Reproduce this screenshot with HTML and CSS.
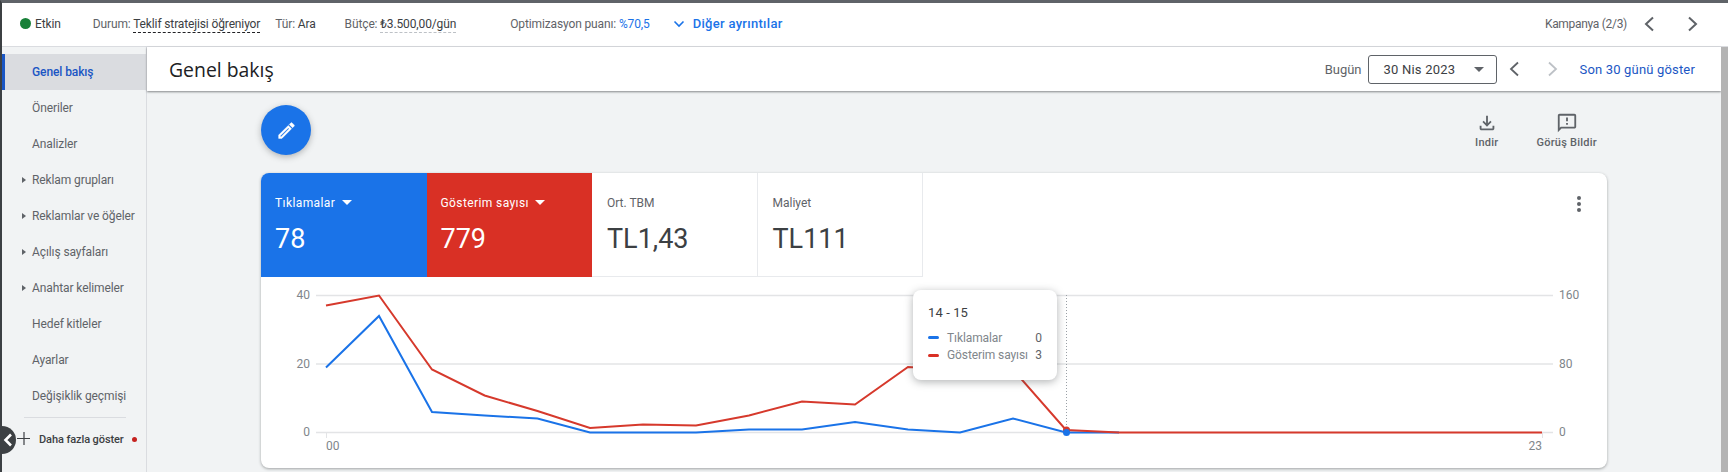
FILE: index.html
```html
<!DOCTYPE html>
<html lang="tr">
<head>
  <meta charset="UTF-8" />
  <title>Genel bakış</title>
  <link rel="stylesheet" href="styles.css">
</head>
<body>

  <div class="summary-bar">
    <span class="status-dot"></span>
    <span class="status-text">Etkin</span>
    <span class="sum-item sum-durum">Durum: <b class="dashed-dark">Teklif stratejisi öğreniyor</b></span>
    <span class="sum-item sum-tur">Tür: <b>Ara</b></span>
    <span class="sum-item sum-butce">Bütçe: <b class="dashed-light">₺3.500,00/gün</b></span>
    <span class="sum-item sum-puan">Optimizasyon puanı: <b class="blue">%70,5</b></span>
    <svg class="more-chevron" width="12" height="8" viewBox="0 0 12 8"><path d="M1.5 1.5 6 6l4.5-4.5" fill="none" stroke="#1a73e8" stroke-width="1.6"/></svg>
    <span class="more-link">Diğer ayrıntılar</span>
    <span class="campaign-count">Kampanya (2/3)</span>
    <svg class="campaign-prev" width="12" height="16" viewBox="0 0 12 16"><path d="M10 1.5 3 8l7 6.5" fill="none" stroke="#5f6368" stroke-width="2"/></svg>
    <svg class="campaign-next" width="12" height="16" viewBox="0 0 12 16"><path d="M2 1.5 9 8l-7 6.5" fill="none" stroke="#5f6368" stroke-width="2"/></svg>
  </div>

  <div class="main">
    <div class="sidenav">
      <div class="nav-item active">Genel bakış</div>
      <div class="nav-item">Öneriler</div>
      <div class="nav-item">Analizler</div>
      <div class="nav-item has-arrow">Reklam grupları</div>
      <div class="nav-item has-arrow">Reklamlar ve öğeler</div>
      <div class="nav-item has-arrow">Açılış sayfaları</div>
      <div class="nav-item has-arrow">Anahtar kelimeler</div>
      <div class="nav-item">Hedef kitleler</div>
      <div class="nav-item">Ayarlar</div>
      <div class="nav-item">Değişiklik geçmişi</div>
      <div class="nav-divider"></div>
      <div class="nav-more">
        <svg width="14" height="14" viewBox="0 0 14 14"><path d="M7 0v13M0 6.5h13" fill="none" stroke="#3c4043" stroke-width="1.2"/></svg>
        <span>Daha fazla göster</span>
        <i class="red-dot"></i>
      </div>
    </div>

    <div class="page">
      <div class="page-header">
        <div class="page-title">Genel bakış</div>
        <span class="date-label">Bugün</span>
        <div class="date-select">
          <span>30 Nis 2023</span>
          <i class="select-arrow"></i>
        </div>
        <svg class="date-prev" width="12" height="16" viewBox="0 0 12 16"><path d="M10 1.5 3 8l7 6.5" fill="none" stroke="#5f6368" stroke-width="1.8"/></svg>
        <svg class="date-next" width="12" height="16" viewBox="0 0 12 16"><path d="M2 1.5 9 8l-7 6.5" fill="none" stroke="#bdc1c6" stroke-width="1.8"/></svg>
        <span class="last-30">Son 30 günü göster</span>
      </div>

      <div class="content">
        <div class="actions">
          <div class="fab">
            <svg width="21" height="21" viewBox="0 0 24 24"><path fill="#fff" stroke="#fff" stroke-width="0.5" d="M14.06 9.02l.92.92L5.92 19H5v-.92l9.06-9.06M17.66 3c-.25 0-.51.1-.7.29l-1.83 1.83 3.75 3.75 1.83-1.83c.39-.39.39-1.02 0-1.41l-2.34-2.34c-.2-.2-.45-.29-.71-.29zm-3.6 3.19L3 17.25V21h3.75L17.81 9.94l-3.75-3.75z"/></svg>
          </div>
          <div class="tool tool-download">
            <svg width="22" height="22" viewBox="0 0 24 24"><path fill="#5f6368" d="M18 15v3H6v-3H4v3c0 1.1.9 2 2 2h12c1.1 0 2-.9 2-2v-3h-2zm-1-4l-1.41-1.41L13 12.17V4h-2v8.17L8.41 9.59 7 11l5 5 5-5z"/></svg>
            <span>Indir</span>
          </div>
          <div class="tool tool-feedback">
            <svg width="22" height="22" viewBox="0 0 24 24"><path fill="#5f6368" d="M20 2H4c-1.1 0-2 .9-2 2v18l4-4h14c1.1 0 2-.9 2-2V4c0-1.1-.9-2-2-2zm0 14H5.17L4 17.17V4h16v12zM11 12h2v2h-2zm0-6h2v4h-2z"/></svg>
            <span>Görüş Bildir</span>
          </div>
        </div>

        <div class="card">
          <div class="tiles">
            <div class="tile tile-blue">
              <div class="tile-label">Tıklamalar <i class="tile-arrow"></i></div>
              <div class="tile-value">78</div>
            </div>
            <div class="tile tile-red">
              <div class="tile-label">Gösterim sayısı <i class="tile-arrow"></i></div>
              <div class="tile-value">779</div>
            </div>
            <div class="tile tile-plain">
              <div class="tile-label">Ort. TBM</div>
              <div class="tile-value">TL1,43</div>
            </div>
            <div class="tile tile-plain">
              <div class="tile-label">Maliyet</div>
              <div class="tile-value">TL111</div>
            </div>
            <div class="tile-menu"><i></i><i></i><i></i></div>
          </div>

          <!-- chart coordinates are relative to the card, hours run 65px + 52.87px * i -->
          <svg class="chart" width="1346" height="191" viewBox="0 0 1346 191">
            <g stroke="#e3e4e6" stroke-width="1.5" fill="none">
              <path d="M55 18.5H1292"/>
              <path d="M55 87H1292"/>
              <path d="M55 155.5H1292"/>
              <path d="M65.5 155v6M1281.5 155v6" stroke-width="1"/>
            </g>
            <g class="axis-text" text-anchor="end">
              <text x="49" y="22">40</text>
              <text x="49" y="91">20</text>
              <text x="49" y="159">0</text>
            </g>
            <g class="axis-text">
              <text x="1298" y="22">160</text>
              <text x="1298" y="91">80</text>
              <text x="1298" y="159">0</text>
              <text x="65" y="173">00</text>
              <text x="1281" y="173" text-anchor="end">23</text>
            </g>
            <path d="M805.5 18V155" stroke="#9aa0a6" stroke-width="1" stroke-dasharray="1 2" fill="none"/>
            <polyline fill="none" stroke="#1a73e8" stroke-width="2" points="65,90.5 118,39 171,135 223.6,138.5 276.5,141.5 329,155.5 382,155.5 435,155.5 488,152.5 541,152.5 594,145 647,152.5 699,155.5 752,141.5 805,155.5 858,155.5"/>
            <polyline fill="none" stroke="#d6392c" stroke-width="2" points="65,28.5 118,18.5 171,92.5 223.6,118.5 276.5,134 329,151 382,147.5 435,148.5 488,138.5 541,124.5 594,127.5 647,90 699,93 752,92.5 805,153 858,155.5 1281,155.5"/>
            <circle cx="805.5" cy="153" r="3.5" fill="#d6392c"/>
            <circle cx="805.5" cy="155.5" r="3.5" fill="#1a73e8"/>
          </svg>

          <div class="tooltip">
            <div class="tooltip-title">14 - 15</div>
            <div class="tooltip-row"><i class="swatch swatch-blue"></i><span class="tooltip-name">Tıklamalar</span><span class="tooltip-num">0</span></div>
            <div class="tooltip-row"><i class="swatch swatch-red"></i><span class="tooltip-name">Gösterim sayısı</span><span class="tooltip-num">3</span></div>
          </div>
        </div>
      </div>
      <div class="scrollbar"></div>
    </div>
  </div>

  <div class="collapse-btn">
    <svg width="10" height="14" viewBox="0 0 10 14"><path d="M8 1.5 2.5 7 8 12.5" fill="none" stroke="#fff" stroke-width="2.6"/></svg>
  </div>

</body>
</html>
```

FILE: styles.css
```css
* {
  box-sizing: border-box;
}
html, body {
  height: 100%;
}
body {
  margin: 0;
  height: 472px;
  overflow: hidden;
  font-family: Roboto, "Liberation Sans", sans-serif;
  font-size: 12px;
  color: #5f6368;
  background-color: #f1f3f4;
  border-top: 3px solid #5f6368;
  border-left: 2px solid #3c4043;
  display: flex;
  flex-direction: column;
  position: relative;
}
b {
  font-weight: 400;
}

/* top summary bar */
.summary-bar {
  height: 44px;
  flex: none;
  display: flex;
  align-items: center;
  padding-bottom: 2px;
  background-color: #fff;
  border-bottom: 1px solid #dadce0;
  white-space: nowrap;
  letter-spacing: -0.13px;
}
.status-dot {
  width: 11px;
  height: 11px;
  margin-left: 18px;
  border-radius: 50%;
  background-color: #188038;
}
.status-text {
  margin-left: 4px;
  color: #3c4043;
}
.sum-item b {
  color: #3c4043;
}
.sum-durum {
  margin-left: 32px;
}
.sum-tur {
  margin-left: 15px;
}
.sum-butce {
  margin-left: 29px;
}
.sum-puan {
  margin-left: 54px;
}
.sum-item .blue {
  color: #1a73e8;
}
.dashed-dark {
  border-bottom: 1px dashed #202124;
  padding-bottom: 1px;
}
.dashed-light {
  border-bottom: 1px dashed #bdc1c6;
  padding-bottom: 1px;
}
.more-chevron {
  margin-left: 23px;
}
.more-link {
  margin-left: 8px;
  font-size: 13px;
  font-weight: 500;
  letter-spacing: 0.3px;
  color: #1a73e8;
}
.campaign-count {
  margin-left: auto;
  letter-spacing: -0.3px;
}
.campaign-prev {
  margin-left: 16px;
}
.campaign-next {
  margin-left: 32px;
  margin-right: 29px;
}

.main {
  flex: 1;
  display: flex;
  min-height: 0;
}

/* left nav */
.sidenav {
  width: 145px;
  flex: none;
  padding-top: 7px;
  border-right: 1px solid #dadce0;
}
.nav-item {
  height: 36px;
  line-height: 36px;
  padding-left: 30px;
  letter-spacing: -0.1px;
  color: #5f6368;
  position: relative;
}
.nav-item.active {
  background-color: #dadce0;
  border-left: 3px solid #1a56c4;
  padding-left: 27px;
  color: #1a56c4;
  font-weight: 500;
}
.has-arrow::before {
  content: "";
  position: absolute;
  left: 20px;
  top: 15px;
  border-left: 4px solid #5f6368;
  border-top: 3.5px solid transparent;
  border-bottom: 3.5px solid transparent;
}
.nav-divider {
  height: 1px;
  margin: 3px 20px 0 22px;
  background-color: #dadce0;
}
.nav-more {
  display: flex;
  align-items: center;
  height: 42px;
  padding-left: 15px;
  font-size: 11px;
  font-weight: 500;
  letter-spacing: -0.1px;
  color: #3c4043;
}
.nav-more span {
  margin-left: 8px;
}
.red-dot {
  width: 5px;
  height: 5px;
  margin-left: 8px;
  border-radius: 50%;
  background-color: #c5221f;
}
.collapse-btn {
  position: absolute;
  left: -14px;
  top: 423px;
  width: 28px;
  height: 28px;
  border-radius: 50%;
  background-color: #3c4043;
  display: flex;
  align-items: center;
  justify-content: flex-end;
  padding-right: 3px;
}

/* page */
.page {
  flex: 1;
  position: relative;
  min-width: 0;
  padding-right: 7px;
}
.scrollbar {
  position: absolute;
  top: 0;
  right: 0;
  bottom: 0;
  width: 7px;
  background-color: #b4b4b4;
}
.page-header {
  height: 44px;
  display: flex;
  align-items: center;
  background-color: #fff;
  box-shadow: 0 1px 2px rgba(60, 64, 67, 0.6);
  position: relative;
}
.page-title {
  margin-left: 22px;
  margin-right: auto;
  font-family: "Open Sans", Roboto, sans-serif;
  font-size: 19.4px;
  color: #202124;
}
.date-label {
  font-size: 13px;
}
.date-select {
  width: 129px;
  height: 29px;
  margin-left: 6px;
  padding: 0 12px 0 15px;
  display: flex;
  align-items: center;
  justify-content: space-between;
  border: 1px solid #5f6368;
  border-radius: 3px;
  font-size: 13px;
  letter-spacing: 0.2px;
  color: #3c4043;
}
.select-arrow {
  border-top: 5px solid #5f6368;
  border-left: 5px solid transparent;
  border-right: 5px solid transparent;
}
.date-prev {
  margin-left: 11px;
}
.date-next {
  margin-left: 27px;
}
.last-30 {
  margin-left: 21px;
  margin-right: 26px;
  font-size: 13px;
  letter-spacing: 0.17px;
  color: #1a56c4;
}

.content {
  padding: 0 114px;
}
.actions {
  height: 82px;
  display: flex;
  align-items: flex-start;
}
.fab {
  width: 50px;
  height: 50px;
  margin-top: 14px;
  margin-right: auto;
  border-radius: 50%;
  background-color: #1a73e8;
  box-shadow: 0 2px 6px rgba(60, 64, 67, 0.35);
  display: flex;
  align-items: center;
  justify-content: center;
}
.tool {
  margin-top: 21px;
  display: flex;
  flex-direction: column;
  align-items: center;
  font-size: 11px;
  font-weight: 500;
  letter-spacing: 0.25px;
}
.tool span {
  margin-top: 2px;
}
.tool-download {
  margin-right: 38px;
}
.tool-feedback {
  margin-right: 10px;
}

/* stats card */
.card {
  width: 1346px;
  height: 295px;
  position: relative;
  background-color: #fff;
  border-radius: 8px;
  box-shadow: 0 1px 3px rgba(60, 64, 67, 0.45);
}
.tiles {
  height: 104px;
  display: flex;
  position: relative;
}
.tile {
  width: 165.5px;
  padding: 22px 14px 0;
  color: #3c4043;
  border-right: 1px solid #e8eaed;
  border-bottom: 1px solid #e8eaed;
}
.tile-blue {
  background-color: #1a73e8;
  color: #fff;
  border: 0;
  border-top-left-radius: 8px;
}
.tile-red {
  background-color: #d93025;
  color: #fff;
  border: 0;
}
.tile-plain {
  padding-left: 15px;
}
.tile-label {
  height: 16px;
  line-height: 16px;
  font-size: 12px;
  letter-spacing: 0.4px;
  white-space: nowrap;
}
.tile-plain .tile-label {
  letter-spacing: 0;
  color: #5f6368;
}
.tile-arrow {
  display: inline-block;
  margin-left: 3px;
  vertical-align: 2px;
  border-top: 5px solid #fff;
  border-left: 5px solid transparent;
  border-right: 5px solid transparent;
}
.tile-value {
  margin-top: 11px;
  font-size: 27px;
  line-height: 34px;
}
.tile-menu {
  position: absolute;
  right: 26px;
  top: 23px;
  display: flex;
  flex-direction: column;
  gap: 2px;
}
.tile-menu i {
  width: 4px;
  height: 4px;
  border-radius: 50%;
  background-color: #5f6368;
}
.chart {
  display: block;
}
.axis-text {
  font-size: 12px;
  fill: #80868b;
}

.tooltip {
  position: absolute;
  left: 652px;
  top: 117px;
  width: 144px;
  height: 90px;
  padding: 15px 15px;
  background-color: #fff;
  border-radius: 8px;
  box-shadow: 0 2px 8px rgba(60, 64, 67, 0.4);
}
.tooltip-title {
  margin-bottom: 8px;
  font-size: 13px;
  line-height: 16px;
  letter-spacing: 0.1px;
  color: #3c4043;
}
.tooltip-row {
  display: flex;
  align-items: center;
  height: 17.5px;
  letter-spacing: -0.1px;
  color: #80868b;
}
.tooltip-name {
  margin-left: 8px;
  flex: 1;
}
.tooltip-num {
  color: #5f6368;
}
.swatch {
  width: 11px;
  height: 3px;
  border-radius: 2px;
}
.swatch-blue {
  background-color: #1a73e8;
}
.swatch-red {
  background-color: #d93025;
}
```
